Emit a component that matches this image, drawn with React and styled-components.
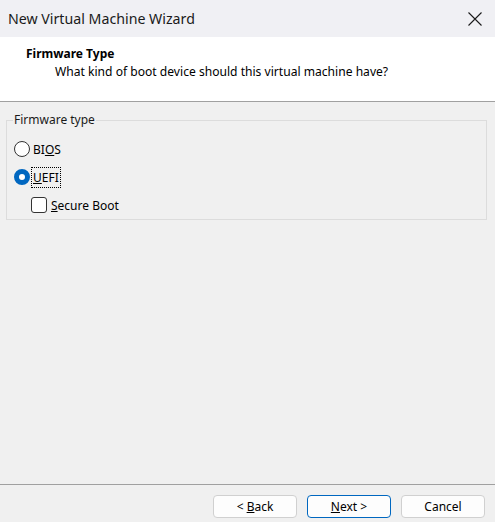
import { createGlobalStyle } from 'styled-components';
import styled from 'styled-components';

const GlobalStyle = createGlobalStyle`
    html, body {
        margin: 0;
        padding: 0;
        background: #f0f0f0;
    }
    * {
        box-sizing: border-box;
    }
`;

export default function App() {
    return (
        <>
            <GlobalStyle />
            <Window>
                <TitleBar>
                    <span>New Virtual Machine Wizard</span>
                    <CloseIcon viewBox="0 0 14 14">
                        <path d="M0.5 0.5 L13.5 13.5 M13.5 0.5 L0.5 13.5" />
                    </CloseIcon>
                </TitleBar>
                <Header>
                    <HeaderTitle>Firmware Type</HeaderTitle>
                    <HeaderSub>What kind of boot device should this virtual machine have?</HeaderSub>
                </Header>
                <Body>
                    <GroupBox>
                        <legend>Firmware type</legend>
                        <Option>
                            <Radio />
                            <Label>BI<u>O</u>S</Label>
                        </Option>
                        <Option>
                            <Radio $checked />
                            <Label $focused><u>U</u>EFI</Label>
                        </Option>
                        <Option $indent>
                            <Check />
                            <Label><u>S</u>ecure Boot</Label>
                        </Option>
                    </GroupBox>
                </Body>
                <Footer>
                    <Button>&lt; <u>B</u>ack</Button>
                    <Button $primary><u>N</u>ext &gt;</Button>
                    <Button>Cancel</Button>
                </Footer>
            </Window>
        </>
    );
}

const Window = styled.div`
    width: 495px;
    height: 522px;
    display: flex;
    flex-direction: column;
    background: #f0f0f0;
    font-family: "Noto Sans", "Liberation Sans", sans-serif;
    font-size: 12px;
    color: #000;
    overflow: hidden;
`;

const TitleBar = styled.div`
    height: 37px;
    flex: none;
    display: flex;
    align-items: center;
    justify-content: space-between;
    padding: 0 13px 0 8px;
    background: #f0f0f4;
    font-size: 14.2px;
    color: #1a1a1a;
`;

const CloseIcon = styled.svg`
    width: 14px;
    height: 14px;
    stroke: #1a1a1a;
    stroke-width: 1.1;
    fill: none;
`;

const Header = styled.div`
    height: 65px;
    flex: none;
    background: #fff;
    border-bottom: 1px solid #a0a0a0;
    padding: 8px 0 0 26px;
    display: flex;
    flex-direction: column;
`;

const HeaderTitle = styled.div`
    font-weight: 700;
    line-height: 18px;
`;

const HeaderSub = styled.div`
    padding-left: 29px;
    line-height: 18px;
    font-size: 12.1px;
`;

const Body = styled.div`
    flex: 1;
    padding: 10px 8px 0 6px;
`;

const GroupBox = styled.fieldset`
    margin: 0;
    height: 108px;
    border: 1px solid #dcdcdc;
    padding: 7px 0 0 7px;
    display: flex;
    flex-direction: column;

    legend {
        padding: 0 1px;
        margin-left: -1px;
        line-height: 16px;
        color: #1a1a1a;
    }
`;

const Option = styled.label`
    display: flex;
    align-items: center;
    gap: 2px;
    height: 28px;
    padding-left: ${p => (p.$indent ? '17px' : '0')};
`;

const Radio = styled.span`
    width: 16px;
    height: 16px;
    border-radius: 50%;
    flex: none;
    background: #fff;
    border: ${p => (p.$checked ? '5px solid #0067c0' : '1px solid #333')};
`;

const Check = styled.span`
    width: 16px;
    height: 16px;
    flex: none;
    border-radius: 3px;
    border: 1px solid #333;
    background: #fff;
    margin-right: 1px;
`;

const Label = styled.span`
    padding: 1px 1px;
    outline: ${p => (p.$focused ? '1px dotted #000' : 'none')};
    outline-offset: 0;
`;

const Footer = styled.div`
    height: 38px;
    flex: none;
    border-top: 1px solid #a0a0a0;
    display: flex;
    justify-content: flex-end;
    align-items: flex-start;
    gap: 10px;
    padding: 10px 10px 0 0;
`;

const Button = styled.button`
    width: 84px;
    height: 23px;
    border-radius: 4px;
    font: inherit;
    color: #000;
    background: #fdfdfd;
    border: 1px solid ${p => (p.$primary ? '#0067c0' : '#d0d0d0')};
    padding: 0;
`;
